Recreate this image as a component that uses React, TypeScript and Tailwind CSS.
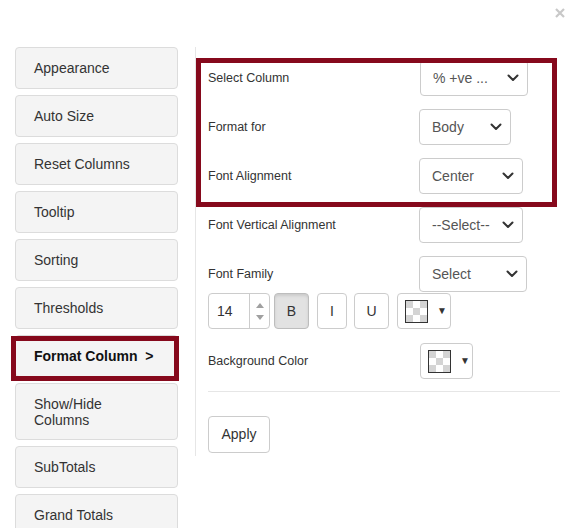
import React from 'react';

const navItems = ['Appearance', 'Auto Size', 'Reset Columns', 'Tooltip', 'Sorting', 'Thresholds'];
const navAfter = ['SubTotals', 'Grand Totals'];

const Chevron: React.FC = () => (
    <svg width="12" height="8" viewBox="0 0 12 8" fill="none" stroke="#333" strokeWidth={2} strokeLinecap="round" strokeLinejoin="round">
        <path d="M1.5 1.5l4.5 4.5 4.5-4.5" />
    </svg>
);

const Select: React.FC<{ value: string; width: string }> = ({ value, width }) => (
    <div className={`${width} h-[36px] flex items-center justify-between pl-[12px] pr-[8px] border border-[#ccc] rounded-[4px] bg-white text-[14px] text-[#555]`}>
        <span>{value}</span>
        <Chevron />
    </div>
);

const Checker: React.FC = () => (
    <div className="w-[23px] h-[23px] border border-[#333] grid grid-cols-3 grid-rows-3">
        <div className="bg-[#d4d4d4]" />
        <div className="bg-white" />
        <div className="bg-[#d4d4d4]" />
        <div className="bg-white" />
        <div className="bg-[#d4d4d4]" />
        <div className="bg-white" />
        <div className="bg-[#d4d4d4]" />
        <div className="bg-white" />
        <div className="bg-[#d4d4d4]" />
    </div>
);

const ColorPicker: React.FC<{ width: string }> = ({ width }) => (
    <div className={`${width} h-[36px] flex items-center gap-[9px] pl-[7px] border border-[#ccc] rounded-[4px] bg-white`}>
        <Checker />
        <span className="text-[10px] text-[#333] leading-none">▼</span>
    </div>
);

const Row: React.FC<{ label: string; children: React.ReactNode }> = ({ label, children }) => (
    <div className="flex items-center">
        <div className="w-[211px] text-[12.5px] text-[#333]">{label}</div>
        {children}
    </div>
);

const NavButton: React.FC<{ label: string }> = ({ label }) => (
    <div className="h-[42px] flex items-center pl-[18px] bg-[#f4f4f4] border border-[#dcdcdc] rounded-[4px] text-[14px] text-[#333]">
        {label}
    </div>
);

const ToggleButton: React.FC<{ label: string; width: string; active?: boolean }> = ({ label, width, active = false }) => (
    <div
        className={`${width} h-[36px] flex items-center justify-center border rounded-[4px] text-[14px] text-[#333] ${
            active ? 'bg-[#e2e2e2] border-[#bdbdbd] shadow-[inset_0_2px_3px_rgba(0,0,0,0.1)]' : 'bg-white border-[#ccc]'
        }`}
    >
        {label}
    </div>
);

export default function App() {
    return (
        <div className="relative w-[568px] h-[528px] overflow-hidden bg-white font-['Liberation_Sans',Arial,sans-serif]">
            {/* close */}
            <svg className="absolute top-[8px] right-[3px]" width="10" height="10" viewBox="0 0 10 10" stroke="#c8c8c8" strokeWidth={2.2}>
                <path d="M1 1l8 8M9 1l-8 8" />
            </svg>

            <div className="flex items-start pt-[47px]">
                {/* Left nav */}
                <div className="ml-[15px] w-[163px] flex flex-col gap-[6px] shrink-0">
                    {navItems.map((item) => (
                        <NavButton key={item} label={item} />
                    ))}
                    <div className="relative">
                        <div className="h-[42px] flex items-center pl-[18px] bg-[#f4f4f4] border border-[#dcdcdc] rounded-[4px] text-[14px] text-[#111] font-bold">
                            Format Column&nbsp;&nbsp;&gt;
                        </div>
                        <div className="absolute left-[-4px] top-[1px] w-[168px] h-[45px] border-[5px] border-[#86091c]" />
                    </div>
                    <div className="h-[57px] flex items-center pl-[18px] bg-[#f4f4f4] border border-[#dcdcdc] rounded-[4px] text-[14px] text-[#333] leading-[16px]">
                        Show/Hide
                        <br />
                        Columns
                    </div>
                    {navAfter.map((item) => (
                        <NavButton key={item} label={item} />
                    ))}
                </div>

                {/* Right panel */}
                <div className="relative ml-[17px] w-[366px] border-l border-[#e6e6e6] pl-[12px] pt-[13px] pb-[3px]">
                    <div className="flex flex-col gap-[13px]">
                        <Row label="Select Column">
                            <div className="ml-[1px]">
                                <Select value="% +ve ..." width="w-[108px]" />
                            </div>
                        </Row>
                        <Row label="Format for">
                            <Select value="Body" width="w-[92px]" />
                        </Row>
                        <Row label="Font Alignment">
                            <Select value="Center" width="w-[104px]" />
                        </Row>
                        <Row label="Font Vertical Alignment">
                            <Select value="--Select--" width="w-[104px]" />
                        </Row>
                        <Row label="Font Family">
                            <Select value="Select" width="w-[108px]" />
                        </Row>
                    </div>

                    {/* font controls */}
                    <div className="flex items-center mt-[1px]">
                        <div className="w-[62px] h-[36px] flex border border-[#ccc] rounded-[4px] bg-white">
                            <div className="w-[40px] flex items-center pl-[8px] text-[14px] text-[#333]">14</div>
                            <div className="flex-1 border-l border-[#ccc] flex flex-col items-center justify-center gap-[7px]">
                                <svg width="8" height="5" viewBox="0 0 8 5"><path d="M0 5L4 0l4 5z" fill="#a0a0a0" /></svg>
                                <svg width="8" height="5" viewBox="0 0 8 5"><path d="M0 0h8L4 5z" fill="#a0a0a0" /></svg>
                            </div>
                        </div>
                        <div className="ml-[4px]">
                            <ToggleButton label="B" width="w-[35px]" active />
                        </div>
                        <div className="ml-[8px]">
                            <ToggleButton label="I" width="w-[30px]" />
                        </div>
                        <div className="ml-[7px]">
                            <ToggleButton label="U" width="w-[35px]" />
                        </div>
                        <div className="ml-[8px]">
                            <ColorPicker width="w-[54px]" />
                        </div>
                    </div>

                    <div className="mt-[14px]">
                        <Row label="Background Color">
                            <div className="ml-[1px]">
                                <ColorPicker width="w-[53px]" />
                            </div>
                        </Row>
                    </div>

                    <div className="mt-[12px] mr-[1px] border-t border-[#e6e6e6]" />

                    <div className="mt-[24px] w-[62px] h-[37px] flex items-center justify-center border border-[#ccc] rounded-[4px] bg-white text-[14px] text-[#333]">
                        Apply
                    </div>

                    {/* highlight around first three rows */}
                    <div className="absolute left-0 top-[11px] w-[361px] h-[149px] border-[5px] border-[#86091c]" />
                </div>
            </div>
        </div>
    );
}
